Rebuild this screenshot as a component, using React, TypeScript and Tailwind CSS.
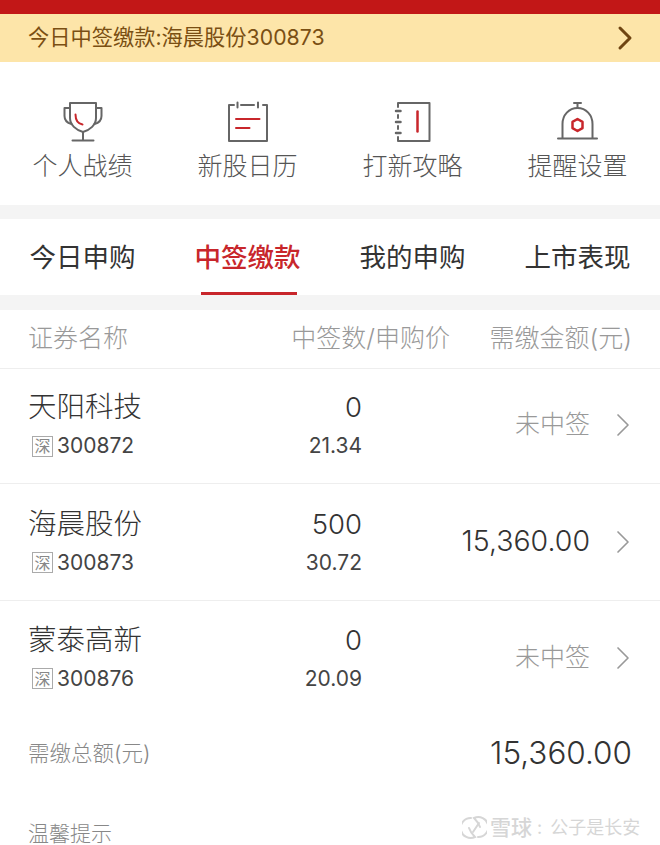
import { ChevronRight } from "lucide-react";

const tools = [
  { label: "个人战绩", icon: <TrophyIcon /> },
  { label: "新股日历", icon: <CalendarIcon /> },
  { label: "打新攻略", icon: <NotebookIcon /> },
  { label: "提醒设置", icon: <BellIcon /> },
];

const tabs = ["今日申购", "中签缴款", "我的申购", "上市表现"];

const rows = [
  { name: "天阳科技", code: "300872", count: "0", price: "21.34", amount: "未中签", height: "h-[115px] pb-[0px]" },
  { name: "海晨股份", code: "300873", count: "500", price: "30.72", amount: "15,360.00", height: "h-[117px] pt-[1px]" },
  { name: "蒙泰高新", code: "300876", count: "0", price: "20.09", amount: "未中签", height: "h-[117px] pb-[2px]" },
];

function TrophyIcon() {
  return (
    <svg width="44" height="44" viewBox="0 0 44 44" fill="none" strokeWidth="2" strokeLinecap="round" strokeLinejoin="round">
      <path d="M9 3h26v15c0 7-6 12-13 14c-7-2-13-7-13-14z" stroke="#666" />
      <path d="M9 8H3.500v8c0 4 3 7 7 8M35 8h5.500v8c0 4-3 7-7 8" stroke="#666" />
      <path d="M22 32v8M11.500 40.500h21" stroke="#666" />
      <path d="M14.500 14.500c0 5 2 9 7 10" stroke="#c8262b" />
    </svg>
  );
}

function CalendarIcon() {
  return (
    <svg width="44" height="44" viewBox="0 0 44 44" fill="none" strokeWidth="2" strokeLinecap="round" strokeLinejoin="round">
      <path d="M8 5H3v36h38V5h-4M15 5h13" stroke="#666" />
      <path d="M11.500 2.500v5M32 2.500v5" stroke="#666" />
      <path d="M10 19h23.500M10 28h13.500" stroke="#c8262b" />
    </svg>
  );
}

function NotebookIcon() {
  return (
    <svg width="44" height="44" viewBox="0 0 44 44" fill="none" strokeWidth="2" strokeLinecap="round" strokeLinejoin="round">
      <path d="M7 7V3h31.500v38H7v-4M7 15v3M7 26v3" stroke="#666" />
      <path d="M5 11h4.500M5 22h4.500M5 33h4.500" stroke="#666" strokeWidth="2.500" />
      <path d="M26.500 11.500v20" stroke="#c8262b" strokeWidth="2.500" />
    </svg>
  );
}

function BellIcon() {
  return (
    <svg width="44" height="44" viewBox="0 0 44 44" fill="none" strokeWidth="2" strokeLinecap="round" strokeLinejoin="round">
      <path d="M18 3h7M21.500 3v5" stroke="#666" />
      <path d="M6.500 38V24c0-9 6.500-16 15-16s15 7 15 16v14" stroke="#666" />
      <path d="M2 38.500h39" stroke="#666" />
      <path d="M21.500 19l5 2.900v6.200l-5 2.900l-5-2.900v-6.200z" stroke="#c8262b" strokeWidth="2.500" />
    </svg>
  );
}

export default function App() {
  return (
    <div className="relative h-[845px] w-[660px] overflow-hidden bg-white font-['Inter','Noto_Sans_CJK_SC',sans-serif] text-[#333]">
      <div className="h-[14px] bg-[#c21717]" />
      <div className="flex h-[48px] items-center justify-between bg-[#fde5a9] pl-[28px] pr-[15px] text-[21.25px] text-[#7a4f13]">
        <span>今日中签缴款:海晨股份300873</span>
        <ChevronRight className="h-[40px] w-[40px] text-[#6f4512]" strokeWidth={1.8} />
      </div>

      <div className="grid h-[143px] grid-cols-4 pt-[38px]">
        {tools.map((t) => (
          <div key={t.label} className="flex flex-col items-center gap-[4px] text-[25px] font-light text-[#555]">
            {t.icon}
            <span className="leading-[36px]">{t.label}</span>
          </div>
        ))}
      </div>
      <div className="h-[14px] bg-[#f4f4f4]" />

      <div className="grid h-[76px] grid-cols-4 text-[26.500px]">
        {tabs.map((t, i) => (
          <div key={t} className="relative flex items-center justify-center pt-[2px]">
            <span className={i === 1 ? "font-medium text-[#c8262b]" : "text-[#333]"}>{t}</span>
            {i === 1 && <div className="absolute bottom-0 left-[36px] h-[3px] w-[96px] bg-[#c8262b]" />}
          </div>
        ))}
      </div>
      <div className="h-[15px] bg-[#f4f4f4]" />

      <div className="flex h-[59px] items-center border-b border-[#eee] px-[28px] text-[25px] font-light text-[#999]">
        <span className="flex-1">证券名称</span>
        <span className="w-[170px] text-right">中签数/申购价</span>
        <span className="w-[182px] text-right">需缴金额(元)</span>
      </div>

      {rows.map((r, i) => (
        <div key={r.code} className={`flex ${r.height} items-center px-[28px] ${i < 2 ? "border-b border-[#eee]" : ""}`}>
          <div className="flex-1 pb-[4px]">
            <div className="text-[28.500px] leading-[40px] font-light text-[#333]">{r.name}</div>
            <div className="mt-[4px] flex items-center gap-[4px] pl-[4px] text-[21px] leading-[30px] text-[#444]">
              <span className="flex h-[21px] w-[21px] items-center justify-center border border-[#aaa] text-[16px] leading-none text-[#888]">深</span>
              {r.code}
            </div>
          </div>
          <div className="w-[140px] pb-[4px] text-right">
            <div className="text-[27.500px] leading-[40px] font-light">{r.count}</div>
            <div className="mt-[4px] text-[21px] leading-[30px] text-[#444]">{r.price}</div>
          </div>
          <div className="flex w-[270px] items-center justify-end pb-[2px]">
            <span className={r.amount === "未中签" ? "text-[25px] font-light text-[#999]" : "text-[28.500px] font-light text-[#333]"}>{r.amount}</span>
            <ChevronRight className="mr-[-10.500px] ml-[12.500px] h-[40px] w-[40px] text-[#999]" strokeWidth={1} />
          </div>
        </div>
      ))}

      <div className="flex h-[70px] items-center justify-between px-[28px]">
        <span className="text-[21.500px] font-light text-[#888]">需缴总额(元)</span>
        <span className="text-[31.500px] font-light text-[#333]">15,360.00</span>
      </div>
      <div className="pt-[30px] pl-[28px] text-[21px] leading-[32px] font-light text-[#888]">温馨提示</div>

      <div className="absolute top-[812px] left-[462px] flex items-center text-[21px] text-[#d6d6d6]">
        <svg width="25" height="25" viewBox="0 0 25 25" fill="none" stroke="#d6d6d6" strokeWidth="2" strokeLinecap="round">
          <path d="M9 3a10 10 0 1 0 4 19c-3-3-5-6-6-9" />
          <path d="M16 22a10 10 0 1 0-4-19c3 3 5 6 6 9" />
          <path d="M17 8l-6 9" />
        </svg>
        <span className="ml-[3px] font-medium">雪球</span>
        <span className="ml-[5px] text-[18px]">:</span>
        <span className="ml-[8px] text-[18px]">公子是长安</span>
      </div>
    </div>
  );
}
